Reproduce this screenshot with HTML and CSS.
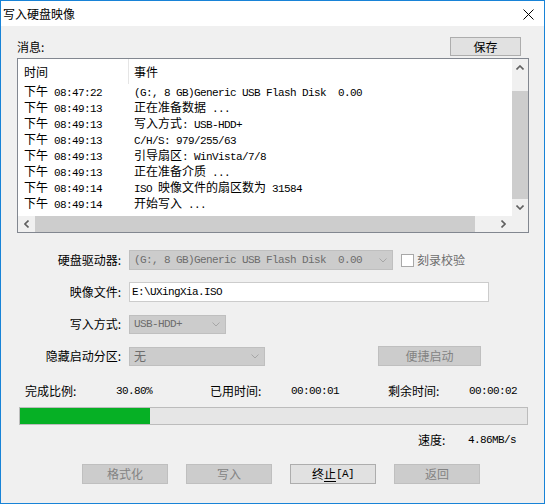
FILE: index.html
```html
<!DOCTYPE html>
<html lang="zh-CN">
<head>
<meta charset="utf-8">
<title>写入硬盘映像</title>
<link rel="stylesheet" href="styles.css">
</head>
<body>
<div class="window">
  <div class="titlebar">
    <span class="title">写入硬盘映像</span>
    <svg class="close" width="11" height="11" viewBox="0 0 11 11"><path d="M0.5 0.5 L10.5 10.5 M10.5 0.5 L0.5 10.5" stroke="#000" stroke-width="1" fill="none"/></svg>
  </div>
  <div class="client">
    <div class="msg-head">
      <span>消息:</span>
      <div class="btn save">保存</div>
    </div>
    <div class="list">
      <div class="list-content">
        <div class="row head"><div class="c1">时间</div><div class="c2">事件</div></div>
        <div class="row"><div class="c1">下午<span class="m"> 08:47:22</span></div><div class="c2"><span class="m">(G:, 8 GB)Generic USB Flash Disk  0.00</span></div></div>
        <div class="row"><div class="c1">下午<span class="m"> 08:49:13</span></div><div class="c2">正在准备数据<span class="m"> ...</span></div></div>
        <div class="row"><div class="c1">下午<span class="m"> 08:49:13</span></div><div class="c2">写入方式<span class="m">: USB-HDD+</span></div></div>
        <div class="row"><div class="c1">下午<span class="m"> 08:49:13</span></div><div class="c2"><span class="m">C/H/S: 979/255/63</span></div></div>
        <div class="row"><div class="c1">下午<span class="m"> 08:49:13</span></div><div class="c2">引导扇区<span class="m">: WinVista/7/8</span></div></div>
        <div class="row"><div class="c1">下午<span class="m"> 08:49:13</span></div><div class="c2">正在准备介质<span class="m"> ...</span></div></div>
        <div class="row"><div class="c1">下午<span class="m"> 08:49:14</span></div><div class="c2"><span class="m">ISO </span>映像文件的扇区数为<span class="m"> 31584</span></div></div>
        <div class="row"><div class="c1">下午<span class="m"> 08:49:14</span></div><div class="c2">开始写入<span class="m"> ...</span></div></div>
      </div>
      <div class="vscroll">
        <div class="arrow"><svg width="8" height="5" viewBox="0 0 8 5"><path d="M0.5 4.5 L4 1 L7.5 4.5" stroke="#606060" stroke-width="1.6" fill="none"/></svg></div>
        <div class="vgap"></div>
        <div class="thumb"></div>
        <div class="arrow"><svg width="8" height="5" viewBox="0 0 8 5"><path d="M0.5 0.5 L4 4 L7.5 0.5" stroke="#606060" stroke-width="1.6" fill="none"/></svg></div>
      </div>
      <div class="hscroll">
        <div class="arrow"><svg width="5" height="8" viewBox="0 0 5 8"><path d="M4.5 0.5 L1 4 L4.5 7.5" stroke="#606060" stroke-width="1.6" fill="none"/></svg></div>
        <div class="hthumb"></div>
        <div class="hgap"></div>
        <div class="arrow"><svg width="5" height="8" viewBox="0 0 5 8"><path d="M0.5 0.5 L4 4 L0.5 7.5" stroke="#606060" stroke-width="1.6" fill="none"/></svg></div>
      </div>
      <div class="corner"></div>
    </div>

    <div class="form">
      <div class="label">硬盘驱动器:</div>
      <div class="ctl">
        <div class="combo w1"><span class="m">(G:, 8 GB)Generic USB Flash Disk  0.00</span><svg width="8" height="5" viewBox="0 0 8 5"><path d="M0.5 0.5 L4 4 L7.5 0.5" stroke="#a6a6a6" stroke-width="1" fill="none"/></svg></div>
        <div class="chk"></div>
        <span class="chk-label">刻录校验</span>
      </div>
      <div class="label">映像文件:</div>
      <div class="ctl">
        <div class="input"><span class="m">E:\UXingXia.ISO</span></div>
      </div>
      <div class="label">写入方式:</div>
      <div class="ctl">
        <div class="combo w2"><span class="m">USB-HDD+</span><svg width="8" height="5" viewBox="0 0 8 5"><path d="M0.5 0.5 L4 4 L7.5 0.5" stroke="#a6a6a6" stroke-width="1" fill="none"/></svg></div>
      </div>
      <div class="label">隐藏启动分区:</div>
      <div class="ctl">
        <div class="combo w3"><span>无</span><svg width="8" height="5" viewBox="0 0 8 5"><path d="M0.5 0.5 L4 4 L7.5 0.5" stroke="#a6a6a6" stroke-width="1" fill="none"/></svg></div>
        <div class="btn dis quick">便捷启动</div>
      </div>
    </div>

    <div class="stats">
      <span>完成比例:</span><span class="m">30.80%</span>
      <span>已用时间:</span><span class="m">00:00:01</span>
      <span>剩余时间:</span><span class="m">00:00:02</span>
    </div>

    <div class="progress"><div class="fill" style="width:25.7%"></div></div>

    <div class="speed"><span class="speed-label">速度:</span><span class="m">4.86MB/s</span></div>

    <div class="actions">
      <div class="btn dis act">格式化</div>
      <div class="btn dis act">写入</div>
      <div class="btn act">终<u>止</u><span class="m">[A]</span></div>
      <div class="btn dis act">返回</div>
    </div>
  </div>
</div>
</body>
</html>
```
FILE: styles.css
```css
* { box-sizing: border-box; }
html, body { margin: 0; padding: 0; }
body {
  font-family: "Noto Sans CJK SC", "Noto Sans", sans-serif;
  font-size: 12px;
  color: #000;
  background: #f0f0f0;
}
.m {
  font-family: "Liberation Mono", "DejaVu Sans Mono", monospace;
  font-size: 11px;
  letter-spacing: -0.6px;
}
.window {
  width: 545px;
  height: 504px;
  border: 1px solid #1883d7;
  background: #f0f0f0;
  display: flex;
  flex-direction: column;
}
.titlebar {
  height: 25px;
  background: #fff;
  display: flex;
  align-items: center;
  justify-content: space-between;
  padding: 2px 10px 0 2px;
  flex: none;
}
.title { line-height: 16px; margin-top: -2px; }
.client {
  flex: 1;
  padding-left: 16px;
  display: flex;
  flex-direction: column;
}
.msg-head {
  margin-top: 11px;
  width: 504px;
  height: 19px;
  display: flex;
  align-items: center;
  justify-content: space-between;
  line-height: 16px;
}
.btn {
  height: 19px;
  border: 1px solid #adadad;
  background: #e1e1e1;
  display: flex;
  align-items: center;
  justify-content: center;
  line-height: 16px;
  white-space: pre;
}
.btn.dis {
  background: #cccccc;
  border-color: #bfbfbf;
  color: #838383;
}
.save { width: 71px; }

.list {
  margin-top: 2px;
  width: 512px;
  height: 175px;
  border: 1px solid #828790;
  background: #fff;
  display: grid;
  grid-template-columns: 494px 16px;
  grid-template-rows: 157px 16px;
}
.list-content { overflow: hidden; }
.row {
  display: flex;
  height: 16px;
  align-items: center;
  white-space: pre;
  line-height: 16px;
}
.row.head { height: 25px; }
.c1 { width: 111px; padding-left: 6px; flex: none; }
.head .c1 {
  height: 100%;
  display: flex;
  align-items: center;
  border-right: 1px solid #e5e5e5;
}
.c2 { padding-left: 5px; }

.vscroll {
  background: #f0f0f0;
  display: flex;
  flex-direction: column;
}
.arrow {
  flex: none;
  display: flex;
  align-items: center;
  justify-content: center;
}
.vscroll .arrow { height: 17px; }
.vgap { height: 15px; }
.thumb { height: 108px; background: #cdcdcd; }
.hscroll {
  background: #f0f0f0;
  display: flex;
}
.hscroll .arrow { width: 17px; }
.hthumb { width: 440px; background: #cdcdcd; }
.hgap { width: 20px; }
.corner { background: #f0f0f0; }

.form {
  margin-top: 17px;
  display: grid;
  grid-template-columns: 104px auto;
  grid-auto-rows: 20px;
  row-gap: 12px;
  column-gap: 8px;
  align-items: center;
}
.label { text-align: right; line-height: 16px; white-space: nowrap; }
.ctl { display: flex; align-items: center; height: 20px; }
.combo {
  height: 20px;
  background: #cccccc;
  border: 1px solid #bfbfbf;
  color: #6d6d6d;
  display: flex;
  align-items: center;
  justify-content: space-between;
  padding: 0 5px 0 4px;
  white-space: pre;
  line-height: 16px;
}
.w1 { width: 264px; }
.w2 { width: 97px; height: 19px; }
.w3 { width: 136px; height: 19px; }
.chk {
  width: 13px;
  height: 13px;
  border: 1px solid #a8a8a8;
  background: #fff;
  margin-left: 8px;
}
.chk-label { margin-left: 3px; color: #6d6d6d; line-height: 16px; }
.input {
  width: 360px;
  height: 20px;
  background: #fff;
  border: 1px solid #cccccc;
  padding-left: 2px;
  display: flex;
  align-items: center;
}
.quick { width: 103px; height: 20px; margin-left: 113px; }

.stats {
  margin-top: 17px;
  padding-left: 8px;
  display: grid;
  grid-template-columns: 91px 94px 81px 97px 81px auto;
  height: 16px;
  line-height: 16px;
  align-items: center;
}
.progress {
  margin-top: 8px;
  margin-left: 2px;
  width: 509px;
  height: 18px;
  border: 1px solid #bcbcbc;
  background: #e6e6e6;
}
.fill { height: 100%; background: #06b025; }
.speed {
  margin-top: 7px;
  padding-left: 401px;
  display: flex;
  align-items: center;
  height: 16px;
  line-height: 16px;
}
.speed-label { width: 50px; }
.actions {
  margin-top: 16px;
  padding-left: 65px;
  display: flex;
  gap: 18px;
}
.act { width: 86px; height: 20px; }
.act u { text-decoration: underline; text-underline-offset: 2px; }
```
